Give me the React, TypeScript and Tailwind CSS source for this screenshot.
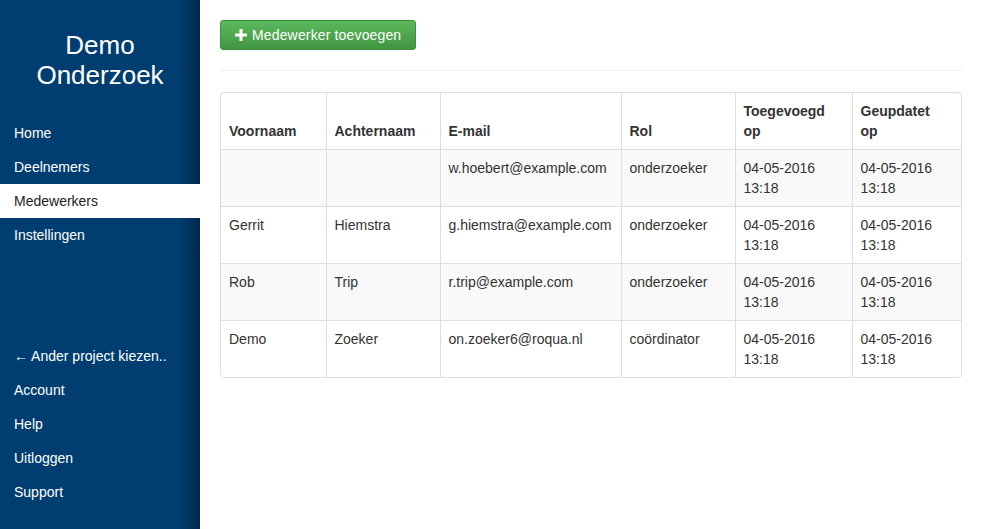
import React from "react";

const rows = [
  { first: "", last: "", email: "w.hoebert@example.com", role: "onderzoeker" },
  { first: "Gerrit", last: "Hiemstra", email: "g.hiemstra@example.com", role: "onderzoeker" },
  { first: "Rob", last: "Trip", email: "r.trip@example.com", role: "onderzoeker" },
  { first: "Demo", last: "Zoeker", email: "on.zoeker6@roqua.nl", role: "coördinator" },
];

const topNav = ["Home", "Deelnemers", "Medewerkers", "Instellingen"];
const bottomNav = ["← Ander project kiezen..", "Account", "Help", "Uitloggen", "Support"];

const NavItem = ({ label, active }: { label: string; active?: boolean }) => (
  <div
    className={
      active
        ? "relative z-10 h-[34px] bg-white px-[14px] leading-[34px] text-[#222]"
        : "h-[34px] px-[14px] leading-[34px] text-white"
    }
  >
    {label}
  </div>
);

const App = () => {
  return (
    <div
      className="flex min-h-[529px] bg-white text-[14px] text-[#333]"
      style={{ fontFamily: '"Liberation Sans", Arial, sans-serif' }}
    >
      <aside className="relative flex w-[200px] shrink-0 flex-col bg-[#003e71] pb-[20px]">
        <div className="pointer-events-none absolute inset-y-0 right-0 w-[24px] bg-[linear-gradient(90deg,rgba(0,0,0,0),rgba(0,0,0,0.32))]" />
        <div className="pt-[30px] text-center text-[26px] leading-[30px] text-white">
          Demo
          <br />
          Onderzoek
        </div>
        <nav className="mt-[26px]">
          {topNav.map((n) => (
            <NavItem key={n} label={n} active={n === "Medewerkers"} />
          ))}
        </nav>
        <nav className="mt-auto">
          {bottomNav.map((n) => (
            <NavItem key={n} label={n} />
          ))}
        </nav>
      </aside>

      <main className="flex-1 px-[20px] pt-[20px]">
        <button className="flex h-[30px] items-center gap-[5px] rounded-[3px] border border-[#3e8f3e] bg-[linear-gradient(180deg,#5cb85c,#419641)] px-[14px] text-[14px] tracking-[0.15px] text-white">
          <svg width="12" height="12" viewBox="0 0 12 12">
            <path d="M4.5 0h3v4.5H12v3H7.5V12h-3V7.5H0v-3h4.5z" fill="#fff" />
          </svg>
          Medewerker toevoegen
        </button>

        <div className="mt-[20px] border-t border-[#eee]" />

        <div className="mt-[21px] overflow-hidden rounded-[4px] border border-[#ddd]">
          <table className="w-full table-fixed border-collapse leading-[20px]">
            <colgroup>
              <col className="w-[105px]" />
              <col className="w-[114px]" />
              <col className="w-[181px]" />
              <col className="w-[114px]" />
              <col className="w-[117px]" />
              <col />
            </colgroup>
            <thead>
              <tr className="font-bold">
                {["Voornaam", "Achternaam", "E-mail", "Rol"].map((h) => (
                  <th key={h} className="border-l border-[#ddd] p-[8px] text-left align-bottom first:border-l-0">
                    {h}
                  </th>
                ))}
                <th className="border-l border-[#ddd] p-[8px] text-left align-bottom">
                  Toegevoegd
                  <br />
                  op
                </th>
                <th className="border-l border-[#ddd] p-[8px] text-left align-bottom">
                  Geupdatet
                  <br />
                  op
                </th>
              </tr>
            </thead>
            <tbody>
              {rows.map((r, i) => (
                <tr key={r.email} className={i % 2 === 0 ? "bg-[#f9f9f9]" : "bg-white"}>
                  <td className="border-t border-[#ddd] p-[8px] align-top">{r.first}</td>
                  <td className="border-l border-t border-[#ddd] p-[8px] align-top">{r.last}</td>
                  <td className="border-l border-t border-[#ddd] p-[8px] align-top">{r.email}</td>
                  <td className="border-l border-t border-[#ddd] p-[8px] align-top">{r.role}</td>
                  <td className="border-l border-t border-[#ddd] p-[8px] align-top">
                    04-05-2016
                    <br />
                    13:18
                  </td>
                  <td className="border-l border-t border-[#ddd] p-[8px] align-top">
                    04-05-2016
                    <br />
                    13:18
                  </td>
                </tr>
              ))}
            </tbody>
          </table>
        </div>
      </main>
    </div>
  );
};

export default App;
